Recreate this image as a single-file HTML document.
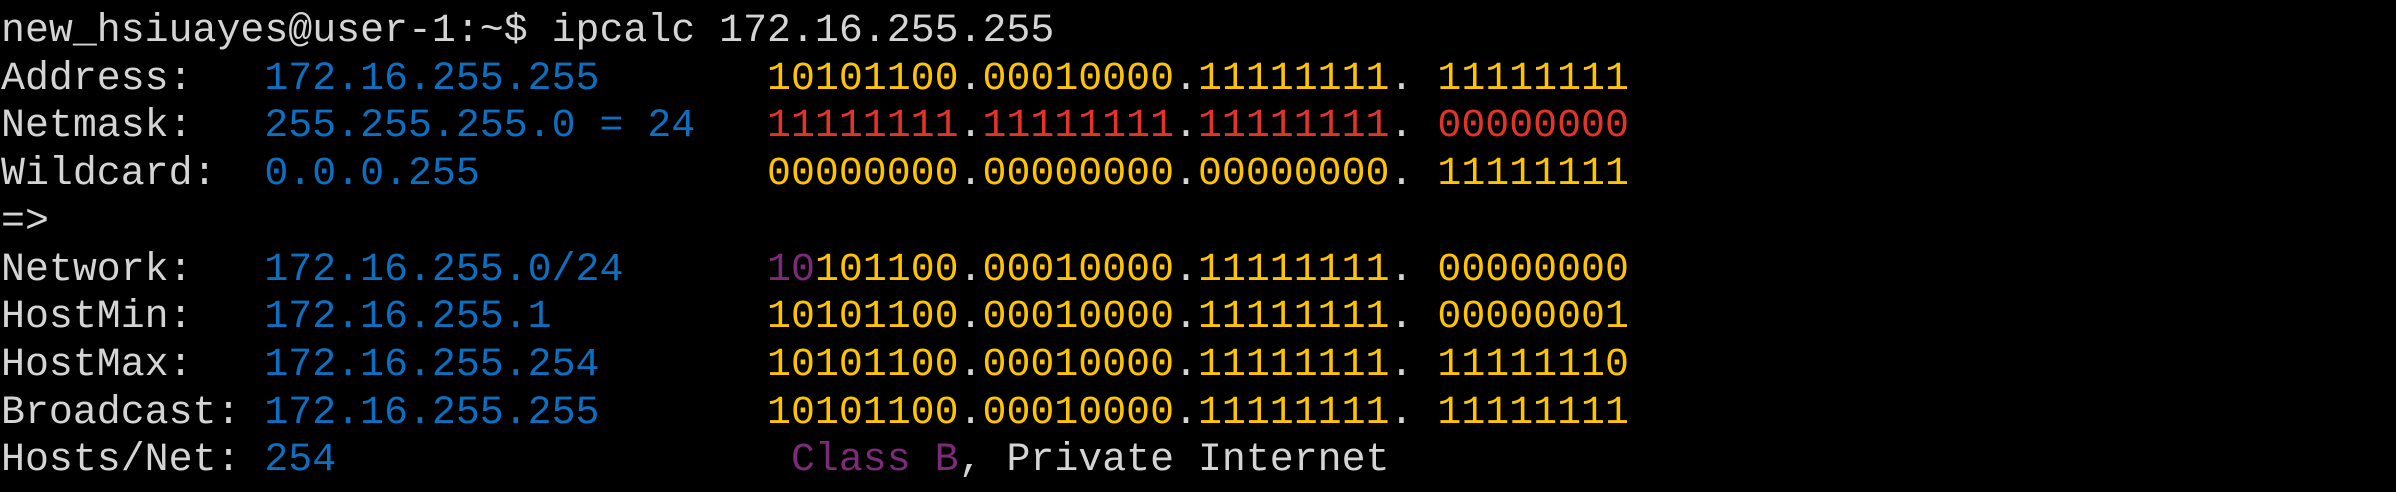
<!DOCTYPE html>
<html><head><style>
html,body{margin:0;padding:0;background:#000;width:2396px;height:492px;overflow:hidden}
pre{margin:0;position:absolute;left:1px;top:7px;font-family:"Liberation Mono","DejaVu Sans Mono",monospace;font-size:39.9px;line-height:47.7px;color:#d4d4d4;letter-spacing:0}
.b{color:#0c6fc0}.y{color:#ffc400}.r{color:#e3342b}.p{color:#7c2b79}.w{color:#d4d4d4}
</style></head><body>
<pre>new_hsiuayes@user-1:~$ ipcalc 172.16.255.255
Address:   <span class="b">172.16.255.255</span>       <span class="y">10101100</span>.<span class="y">00010000</span>.<span class="y">11111111</span>. <span class="y">11111111</span>
Netmask:   <span class="b">255.255.255.0 = 24</span>   <span class="r">11111111</span>.<span class="r">11111111</span>.<span class="r">11111111</span>. <span class="r">00000000</span>
Wildcard:  <span class="b">0.0.0.255</span>            <span class="y">00000000</span>.<span class="y">00000000</span>.<span class="y">00000000</span>. <span class="y">11111111</span>
=&gt;
Network:   <span class="b">172.16.255.0/24</span>      <span class="p">10</span><span class="y">101100</span>.<span class="y">00010000</span>.<span class="y">11111111</span>. <span class="y">00000000</span>
HostMin:   <span class="b">172.16.255.1</span>         <span class="y">10101100</span>.<span class="y">00010000</span>.<span class="y">11111111</span>. <span class="y">00000001</span>
HostMax:   <span class="b">172.16.255.254</span>       <span class="y">10101100</span>.<span class="y">00010000</span>.<span class="y">11111111</span>. <span class="y">11111110</span>
Broadcast: <span class="b">172.16.255.255</span>       <span class="y">10101100</span>.<span class="y">00010000</span>.<span class="y">11111111</span>. <span class="y">11111111</span>
Hosts/Net: <span class="b">254</span>                   <span class="p">Class B</span>, Private Internet</pre>
</body></html>
